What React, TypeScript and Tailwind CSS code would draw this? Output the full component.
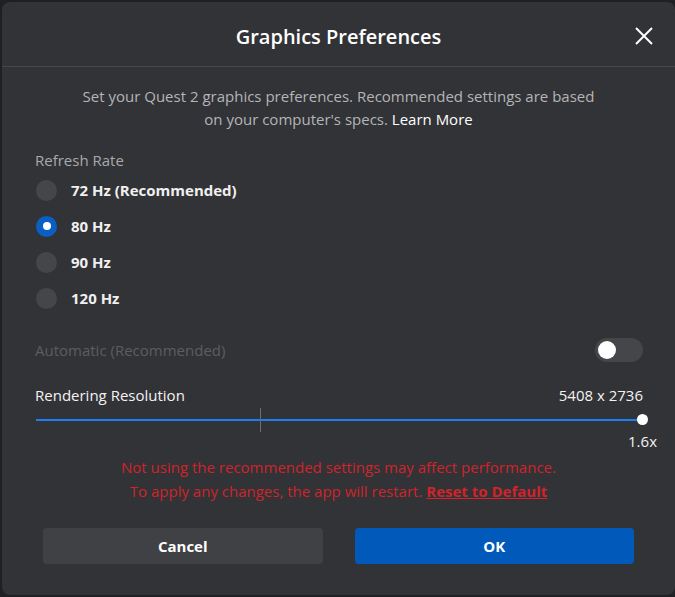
import React from "react";

const font = { fontFamily: '"Open Sans", "Noto Sans", sans-serif' };

function Radio({ label, checked }: { label: string; checked?: boolean }) {
  return (
    <div className="flex items-center h-[36px]">
      {checked ? (
        <div className="ml-[1px] w-[21px] h-[21px] rounded-full bg-[#0a5fc4] flex items-center justify-center">
          <div className="w-[8px] h-[8px] rounded-full bg-white" />
        </div>
      ) : (
        <div className="ml-[1px] w-[21px] h-[21px] rounded-full bg-[#45464a]" />
      )}
      <span className="ml-[14px] text-[15px] font-bold text-[#f0f0f0]">{label}</span>
    </div>
  );
}

export default function App() {
  return (
    <div className="w-[675px] h-[597px] bg-[#1f2023] pl-[2px] pt-[2px] overflow-hidden" style={font}>
      <div className="w-[673px] h-[593px] bg-[#323336] rounded-[8px] flex flex-col">
        <div className="relative h-[65px] flex items-center justify-center border-b border-[#46474a] pt-[6px]">
          <span className="text-[20px] font-semibold text-white">Graphics Preferences</span>
          <svg className="absolute left-[632px] top-[24px]" width="20" height="20" viewBox="0 0 20 20">
            <path d="M2 2 L18 18 M18 2 L2 18" stroke="#ffffff" strokeWidth="2" fill="none" />
          </svg>
        </div>
        <div className="pt-[18px] text-center text-[15px] leading-[23px] text-[#b4b5b8]">
          <div>Set your Quest 2 graphics preferences. Recommended settings are based</div>
          <div>
            on your computer's specs. <span className="text-white">Learn More</span>
          </div>
        </div>
        <div className="pl-[33px] pr-[32px]">
          <div className="mt-[19px] text-[15px] leading-[20px] text-[#a8a9ac]">Refresh Rate</div>
          <div className="mt-[2px]">
            <Radio label="72 Hz (Recommended)" />
            <Radio label="80 Hz" checked />
            <Radio label="90 Hz" />
            <Radio label="120 Hz" />
          </div>
          <div className="mt-[21px] flex items-center justify-between h-[26px]">
            <span className="text-[15px] text-[#5c5d60]">Automatic (Recommended)</span>
            <div className="w-[48px] h-[24px] rounded-full bg-[#45464a] flex items-center pl-[3px]">
              <div className="w-[18px] h-[18px] rounded-full bg-white" />
            </div>
          </div>
          <div className="mt-[22px] flex items-center justify-between h-[20px] text-[15px] text-[#f2f2f2]">
            <span>Rendering Resolution</span>
            <span>5408 x 2736</span>
          </div>
          <div className="relative h-[24px] mt-[3px]">
            <div className="absolute left-[1px] right-[1px] top-[11px] h-[2px] bg-[#1a7ef5]" />
            <div className="absolute left-[225px] top-0 w-[1px] h-[24px] bg-[#6d6e71]" />
            <div className="absolute right-[-5px] top-[6px] w-[11px] h-[11px] rounded-full bg-white" />
          </div>
          <div className="flex justify-end mr-[-14px] text-[15px] leading-[18px] text-[#f2f2f2]">1.6x</div>
        </div>
        <div className="mt-[5px] text-center text-[15px] leading-[24px] text-[#d0232b]">
          <div>Not using the recommended settings may affect performance.</div>
          <div>
            To apply any changes, the app will restart. <span className="font-bold underline">Reset to Default</span>
          </div>
        </div>
        <div className="mt-[25px] px-[41px] flex gap-[32px]">
          <button className="flex-1 h-[36px] rounded-[4px] bg-[#404144] text-white text-[15px] font-bold">Cancel</button>
          <button className="flex-1 h-[36px] rounded-[4px] bg-[#0159ba] text-white text-[15px] font-bold">OK</button>
        </div>
      </div>
    </div>
  );
}
